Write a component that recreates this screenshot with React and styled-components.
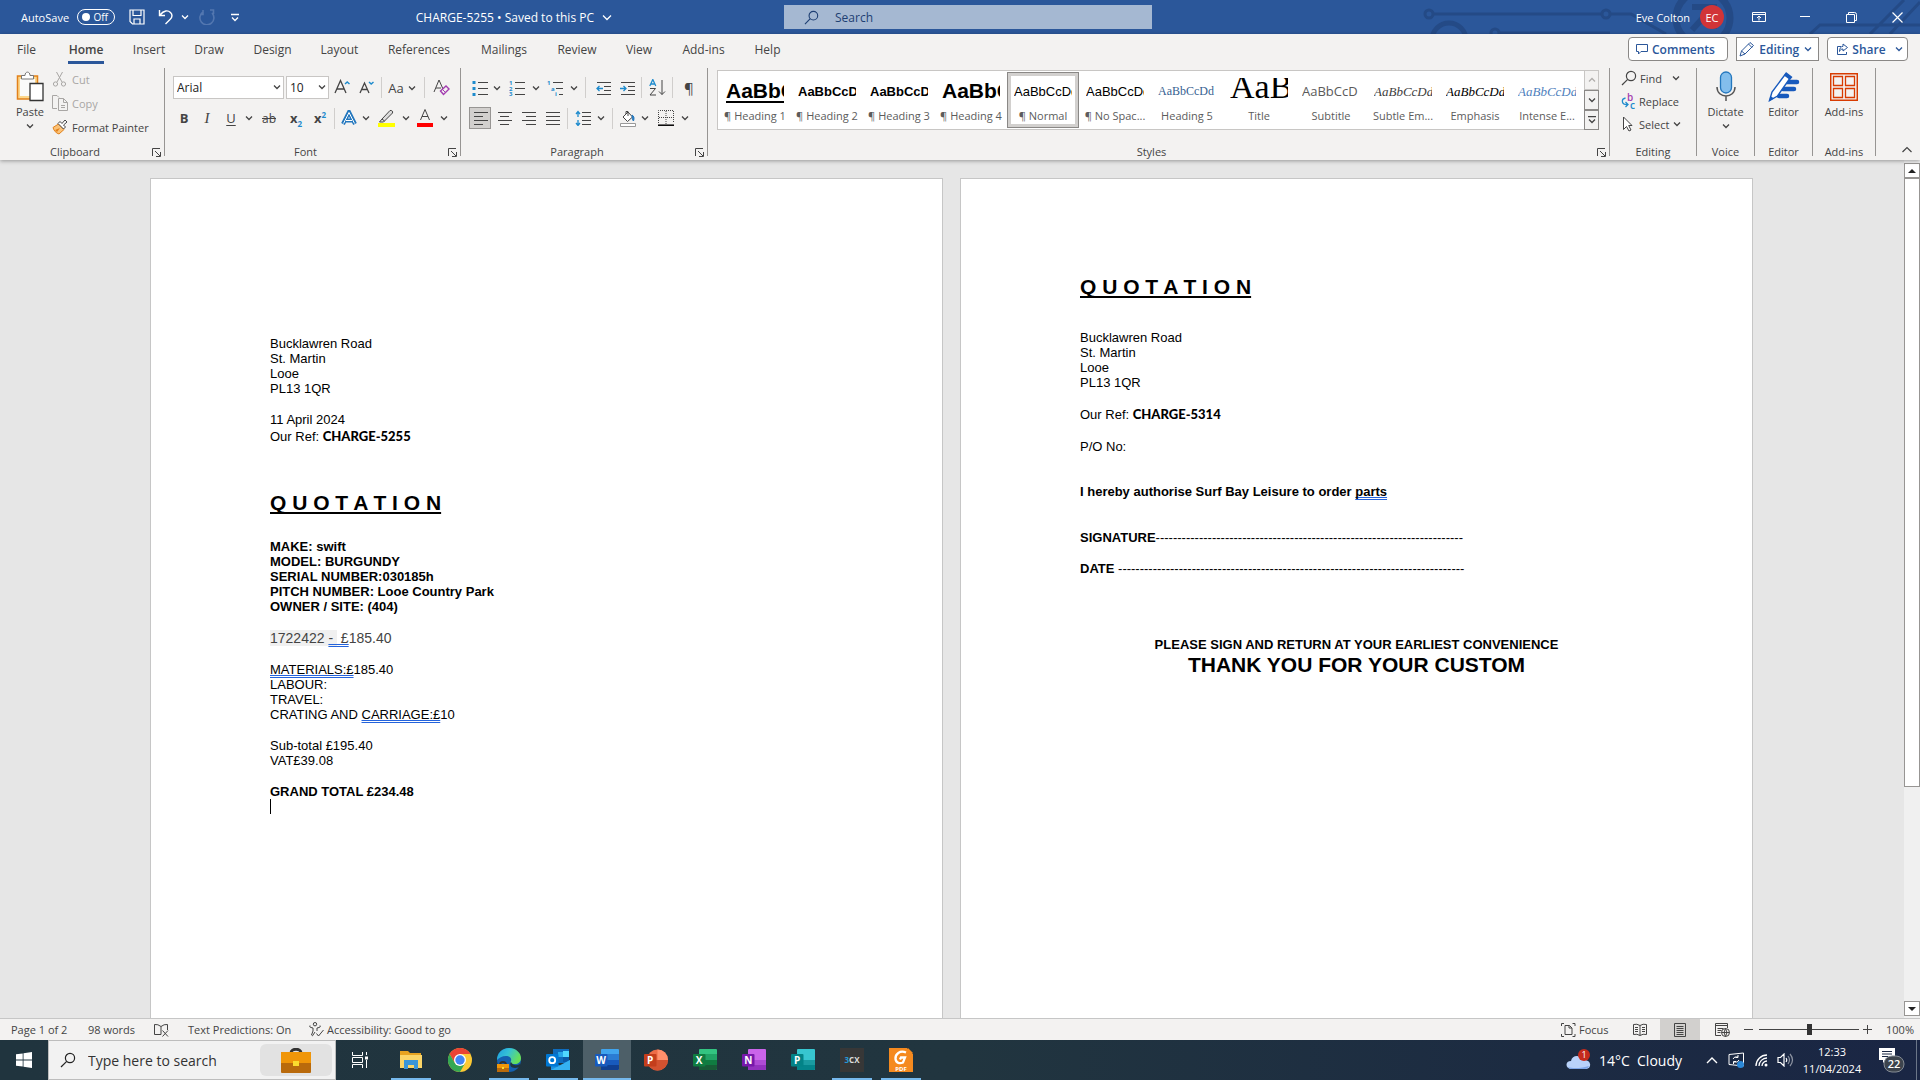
import React from "react";
import styled, { createGlobalStyle, css } from "styled-components";

const UI = `"Open Sans", "Noto Sans", sans-serif`;
const ARIAL = `"Liberation Sans", Arial, sans-serif`;
const SERIF = `"Liberation Serif", serif`;

const GlobalStyle = createGlobalStyle`
  * {
    box-sizing: border-box;
  }
  body {
    margin: 0;
    overflow: hidden;
    font-family: ${UI};
    font-size: 11px;
    color: #444;
  }
  button, input, select {
    font: inherit;
    color: inherit;
    margin: 0;
  }
  svg {
    display: block;
    flex: none;
  }
`;

const Screen = styled.div`
  display: flex;
  flex-direction: column;
  height: 100vh;
`;

/* ---------- title bar ---------- */

const TitleBar = styled.header`
  position: relative;
  display: grid;
  grid-template-columns: minmax(0, 784fr) 368px minmax(0, 768fr);
  align-items: center;
  height: 34px;
  flex: none;
  background: #2b579a;
  color: #fff;
  overflow: hidden;
`;

const Circuit = styled.svg`
  position: absolute;
  right: 0;
  top: 0;
`;

const TitleSide = styled.div`
  position: relative;
  display: flex;
  align-items: center;
  height: 100%;
  padding-left: 21px;
  justify-content: ${({ $end }) => ($end ? "flex-end" : "flex-start")};
`;

const AutoSave = styled.label`
  display: flex;
  align-items: center;
  gap: 8px;
  margin-right: 8px;
`;

const Toggle = styled.span`
  position: relative;
  display: flex;
  align-items: center;
  justify-content: flex-end;
  width: 38px;
  height: 16px;
  padding-right: 6px;
  border: 1px solid #fff;
  border-radius: 8px;
  font-size: 10px;
  input {
    position: absolute;
    left: 4px;
    appearance: none;
    width: 8px;
    height: 8px;
    border-radius: 50%;
    background: #fff;
  }
`;

const BarButton = styled.button`
  display: flex;
  align-items: center;
  justify-content: center;
  width: ${({ $w }) => $w}px;
  height: 24px;
  padding: 0;
  border: 0;
  background: none;
`;

const DocName = styled.button`
  display: flex;
  align-items: center;
  gap: 8px;
  margin-left: auto;
  margin-right: 172px;
  padding: 0;
  border: 0;
  background: none;
  font-size: 12px;
  white-space: nowrap;
`;

const TitleSearch = styled.label`
  display: flex;
  align-items: center;
  gap: 16px;
  height: 24px;
  padding-left: 20px;
  background: #a5b8d2;
  color: #1e3f73;
  input {
    flex: 1;
    min-width: 0;
    padding: 0;
    border: 0;
    background: none;
    font-size: 12px;
  }
  input::placeholder {
    color: #1e3f73;
    opacity: 1;
  }
`;

const Avatar = styled.span`
  display: flex;
  align-items: center;
  justify-content: center;
  width: 24px;
  height: 24px;
  margin: 0 12px 0 10px;
  border-radius: 50%;
  background: #d13438;
`;

/* ---------- ribbon ---------- */

const Ribbon = styled.section`
  position: relative;
  z-index: 1;
  flex: none;
  background: #f3f2f1;
  box-shadow: 0 1px 4px rgba(0, 0, 0, 0.35);
`;

const TabRow = styled.nav`
  display: flex;
  align-items: center;
  height: 34px;
  padding-right: 12px;
`;

const Tab = styled.a`
  display: flex;
  justify-content: center;
  width: ${({ $w }) => $w}px;
  color: #444;
  font-size: 12px;
  line-height: 22px;
  text-decoration: none;
  white-space: nowrap;
  span {
    height: 25px;
    margin-top: 1px;
    padding: 0 1px;
    border-bottom: 3px solid transparent;
  }
  ${({ $active }) =>
    $active &&
    css`
      font-weight: 600;
      span {
        border-color: #2b579a;
      }
    `}
`;

const TabActions = styled.div`
  display: flex;
  gap: 8px;
  margin-left: auto;
`;

const ActionButton = styled.button`
  display: flex;
  align-items: center;
  justify-content: ${({ $start }) => ($start ? "flex-start" : "space-between")};
  gap: ${({ $start }) => ($start ? 4 : 0)}px;
  width: ${({ $w }) => $w}px;
  height: 24px;
  margin-top: -4px;
  padding: 0 ${({ $pad }) => $pad || 7}px;
  border: 1px solid #8a8886;
  border-radius: ${({ $square }) => ($square ? 0 : 4)}px;
  background: #fff;
  color: #2b579a;
  font-size: 12px;
  font-weight: 600;
`;

const Groups = styled.div`
  display: flex;
  height: 92px;
`;

const Group = styled.div`
  display: flex;
  flex-direction: column;
  ${({ $w }) => ($w ? `width: ${$w}px; flex: none;` : "flex: 1; min-width: 0;")}
`;

const GroupBody = styled.div`
  flex: 1;
  padding-left: ${({ $left }) => $left || 0}px;
  padding-top: ${({ $top }) => $top || 0}px;
  display: flex;
  flex-direction: ${({ $column }) => ($column ? "column" : "row")};
  gap: ${({ $gap }) => $gap || 0}px;
`;

const GroupFooter = styled.div`
  display: flex;
  align-items: center;
  height: 16px;
  line-height: 16px;
  span {
    flex: 1;
    text-align: center;
  }
  button {
    display: flex;
    width: 14px;
    padding: 0 2px;
    border: 0;
    background: none;
  }
`;

const Separator = styled.div`
  width: 1px;
  height: 88px;
  flex: none;
  background: #979593;
`;

const ToolRow = styled.div`
  display: flex;
  align-items: center;
  height: ${({ $h }) => $h}px;
`;

const Tool = styled.button`
  display: flex;
  align-items: center;
  justify-content: center;
  width: ${({ $w }) => $w}px;
  height: 100%;
  padding: 0;
  flex: none;
  font-size: 13px;
  border: 1px solid ${({ $on }) => ($on ? "#979593" : "transparent")};
  background: ${({ $on }) => ($on ? "#d2d0ce" : "none")};
`;

const ToolDivider = styled.span`
  width: ${({ $w }) => $w}px;
  height: 21px;
  flex: none;
  background: linear-gradient(#d0cecc, #d0cecc) center / 1px 100% no-repeat;
`;

const SelectBox = styled.label`
  position: relative;
  display: flex;
  width: ${({ $w }) => $w}px;
  height: 23px;
  margin-right: ${({ $gap }) => $gap || 0}px;
  select {
    appearance: none;
    width: 100%;
    padding: 0 3px 1px;
    border: 1px solid #c8c6c4;
    border-radius: 0;
    background: #fff;
    color: #222;
    font-size: 12px;
  }
  svg {
    position: absolute;
    right: 3px;
    top: 8px;
  }
`;

const BigButton = styled.button`
  display: flex;
  flex-direction: column;
  align-items: center;
  width: ${({ $w }) => $w}px;
  height: 72px;
  padding: 3px 0 0;
  border: 0;
  background: none;
  line-height: 16px;
  span {
    margin: 2px 0 3px;
  }
`;

const SmallButton = styled.button`
  display: flex;
  align-items: center;
  gap: ${({ $gap }) => $gap || 4}px;
  height: ${({ $h }) => $h}px;
  padding: 0;
  border: 0;
  background: none;
  white-space: nowrap;
  color: ${({ disabled }) => (disabled ? "#a8a6a4" : "#444")};
  svg:last-child:not(:first-child) {
    margin-left: ${({ $gap }) => ($gap ? 1 : 4)}px;
  }
`;

const Gallery = styled.div`
  display: flex;
  width: 100%;
  height: 60px;
  margin-right: 10px;
  border: 1px solid #c8c6c4;
  border-right: 0;
  background: #fff;
`;

const GalleryItems = styled.div`
  display: flex;
  flex: 1;
  min-width: 0;
  padding: 1px;
  overflow: hidden;
`;

const StyleItem = styled.button`
  display: flex;
  flex-direction: column;
  align-items: center;
  gap: 2px;
  width: 72px;
  height: 56px;
  flex: none;
  padding: 6px 0 0;
  border: 0;
  background: none;
  color: #5c5c5c;
  box-shadow: ${({ $on }) =>
    $on ? "inset 0 0 0 1px #8a8886, inset 0 0 0 4px #d2d0ce" : "none"};
`;

const Preview = styled.span`
  display: block;
  width: 58px;
  height: 28px;
  overflow: hidden;
  white-space: nowrap;
  text-align: left;
  font-family: ${({ $font }) => $font};
  font-size: ${({ $size }) => $size}px;
  font-weight: ${({ $bold }) => ($bold ? 700 : 400)};
  font-style: ${({ $italic }) => ($italic ? "italic" : "normal")};
  color: ${({ $color }) => $color || "#000"};
  line-height: ${({ $lh }) => $lh || 27}px;
  text-decoration: ${({ $underline }) => ($underline ? "underline 2px" : "none")};
  text-underline-offset: 3px;
`;

const StyleName = styled.span`
  height: 16px;
  line-height: 16px;
  white-space: nowrap;
`;

const GalleryScroll = styled.div`
  display: grid;
  grid-template-rows: 1fr 1fr 1fr;
  width: 15px;
  margin: -1px 0;
  button {
    display: flex;
    align-items: center;
    justify-content: center;
    padding: 0;
    border: 1px solid #8a8886;
    background: #f3f2f1;
  }
  button:disabled {
    border-color: #c8c6c4;
    color: #b0aeac;
  }
`;

const CollapseRibbon = styled.div`
  display: flex;
  align-items: flex-end;
  justify-content: flex-end;
  width: 44px;
  padding: 0 8px 4px;
`;

/* ---------- document ---------- */

const Workspace = styled.main`
  display: flex;
  flex: 1;
  min-height: 0;
  background: #e6e6e6;
`;

const Pages = styled.div`
  display: flex;
  flex: 1;
  justify-content: center;
  gap: 17px;
  padding: 18px 1px 0 0;
  overflow: hidden;
`;

const Page = styled.article`
  width: 793px;
  height: 1123px;
  flex: none;
  padding: ${({ $top }) => $top}px 119px 0;
  border: 1px solid #c6c6c6;
  background: #fff;
  color: #000;
  font-family: ${ARIAL};
  font-size: 13px;
`;

const Block = styled.div`
  margin-bottom: ${({ $after }) => ($after === undefined ? 16 : $after)}px;
  line-height: ${({ $lh }) => $lh || 15}px;
  font-weight: ${({ $bold }) => ($bold ? 700 : 400)};
  text-align: ${({ $center }) => ($center ? "center" : "left")};
  white-space: pre;
  p {
    margin: 0;
  }
`;

const Heading = styled.h1`
  margin: 0 0 ${({ $after }) => $after}px;
  font-size: 21px;
  line-height: 24px;
  text-align: ${({ $center }) => ($center ? "center" : "left")};
  text-decoration: ${({ $center }) => ($center ? "none" : "underline 2px")};
  text-underline-offset: 2px;
  text-decoration-skip-ink: none;
`;

const Ref = styled.b`
  font-family: Lato, sans-serif;
  font-weight: 900;
`;

const Dashes = styled.span`
  font-weight: 400;
`;

const Grammar = styled.span`
  text-decoration: underline double #2463dc 1px;
  text-decoration-skip-ink: none;
  text-underline-offset: 1px;
`;

const PartLine = styled.p`
  color: #444;
  font-size: 14px;
  mark {
    background: #f0f0f0;
    color: inherit;
  }
`;

const Caret = styled.div`
  width: 1px;
  height: 15px;
  background: #000;
`;

const Scrollbar = styled.div`
  display: flex;
  flex-direction: column;
  width: 16px;
  padding: 3px 0 2px;
  background: #f0f0f0;
  button {
    display: flex;
    align-items: center;
    justify-content: center;
    height: 15px;
    padding: 0;
    border: 1px solid #979593;
    background: #fff;
  }
`;

const Track = styled.div`
  flex: 1;
`;

const Thumb = styled.div`
  height: 74%;
  border: 1px solid #979593;
  background: #fff;
`;

/* ---------- status bar ---------- */

const StatusBar = styled.footer`
  display: flex;
  align-items: center;
  height: 22px;
  flex: none;
  padding: 0 6px 0 11px;
  border-top: 1px solid #c6c6c6;
  background: #f3f2f1;
  white-space: nowrap;
`;

const StatusItem = styled.button`
  display: flex;
  align-items: center;
  gap: 3px;
  min-width: ${({ $w }) => $w}px;
  height: 21px;
  padding: 0;
  border: 0;
  background: ${({ $on }) => ($on ? "#d2d0ce" : "none")};
  justify-content: ${({ $center }) => ($center ? "center" : "flex-start")};
`;

const StatusRight = styled.div`
  display: flex;
  align-items: center;
  margin-left: auto;
`;

const Zoom = styled.input`
  appearance: none;
  width: 100px;
  height: 12px;
  background: linear-gradient(#444, #444) center / 100% 1px no-repeat;
  &::-webkit-slider-thumb {
    appearance: none;
    width: 5px;
    height: 11px;
    background: #333;
  }
`;

/* ---------- taskbar ---------- */

const Taskbar = styled.footer`
  display: flex;
  height: 40px;
  flex: none;
  background: linear-gradient(90deg, #20343e, #21353f 50%, #1c2b42 80%, #1a2644);
  color: #fff;
`;

const TaskButton = styled.button`
  display: flex;
  align-items: center;
  justify-content: center;
  width: ${({ $w }) => $w || 48}px;
  margin-right: ${({ $gap }) => $gap || 0}px;
  padding: 0;
  border: 0;
  background: ${({ $active }) => ($active ? "#4d5f68" : "none")};
  ${({ $open }) =>
    $open &&
    css`
      background: linear-gradient(#76b9ed, #76b9ed) bottom / 40px 2px no-repeat;
    `}
  ${({ $active }) => $active && "box-shadow: inset 0 -2px #76b9ed;"}
`;

const TaskSearch = styled.label`
  display: flex;
  align-items: center;
  width: 288px;
  padding: 0 3px 0 11px;
  border: 1px solid #bdbdbd;
  background: #f2f2f2;
  color: #222;
  input {
    flex: 1;
    min-width: 0;
    margin-left: 12px;
    padding: 0;
    border: 0;
    background: none;
    font-size: 14px;
  }
  input::placeholder {
    color: #333;
    opacity: 1;
  }
`;

const Highlight = styled.span`
  display: flex;
  align-items: center;
  justify-content: center;
  width: 72px;
  height: 32px;
  border-radius: 6px;
  background: #e2e2e2;
`;

const Tray = styled.div`
  display: flex;
  align-items: center;
  margin-left: auto;
  padding-right: 3px;
`;

const Weather = styled.button`
  display: flex;
  align-items: center;
  gap: 8px;
  margin-right: 18px;
  padding: 0;
  border: 0;
  background: none;
  font-size: 14px;
  white-space: pre;
`;

const Clock = styled.time`
  width: 72px;
  margin-right: 9px;
  line-height: 17px;
  text-align: center;
`;

const ShowDesktop = styled.span`
  width: 1px;
  height: 40px;
  margin-left: 11px;
  background: #6b7688;
`;

/* ---------- drawings ---------- */

const Svg = ({ w = 16, h = 16, sw = 1, children, ...rest }) => (
  <svg
    width={w}
    height={h}
    viewBox={`0 0 ${w} ${h}`}
    fill="none"
    stroke="currentColor"
    strokeWidth={sw}
    aria-hidden="true"
    {...rest}
  >
    {children}
  </svg>
);

const Chevron = ({ up }) => (
  <Svg w={8} h={6} sw={1.3}>
    <path d={up ? "M1 4.5 4 1.5 7 4.5" : "M1 1.5 4 4.5 7 1.5"} />
  </Svg>
);

const Lens = ({ size = 16 }) => (
  <Svg w={size} h={size} viewBox="0 0 16 16" sw={1.2}>
    <circle cx="10" cy="6" r="4.6" />
    <path d="M6.7 9.3 1 15" />
  </Svg>
);

const Launcher = () => (
  <Svg w={9} h={9}>
    <path d="M.5 8V.5H8M3 3l5 5M8.5 4v4.5H4" />
  </Svg>
);

const SaveIcon = () => (
  <Svg sw={1.2}>
    <path d="M1 1h14v14H3.5L1 12.5zM4 1v5.500h8V1M5 15v-5h6v5" />
  </Svg>
);

const UndoIcon = () => (
  <Svg sw={1.4}>
    <path d="M1.500 1v5.500H7M2 6c4-5 8-5 10.500-2.500 2.500 2.600 1.500 5-.5 7L7.500 15" />
  </Svg>
);

const RedoIcon = () => (
  <Svg sw={1.6} stroke="#5377b0">
    <path d="M4 1v4.500H1M4 3a7 7 0 1 0 9 1M11 1h3.500v4" />
  </Svg>
);

const PasteIcon = () => (
  <Svg w={28} h={31}>
    <rect x="1.500" y="5" width="20" height="23" fill="#fcd78c" stroke="#e2811a" strokeWidth="1.500" />
    <path d="M4 8h15v17H4z" fill="#fafafa" stroke="none" />
    <path d="M5.500 8V4.500h3.500c0-4.500 5-4.500 5 0h3.500V8z" fill="#fff" stroke="#777" />
    <path d="M14 12.500h13v17H14z" fill="#fff" stroke="#333" strokeWidth="1.300" />
  </Svg>
);

const CutIcon = () => (
  <Svg>
    <path d="M4.500 1 10 11M10.500 1 5 11" />
    <circle cx="3.500" cy="13" r="2.100" />
    <circle cx="11.500" cy="13" r="2.100" />
  </Svg>
);

const CopyIcon = () => (
  <Svg>
    <path d="M5 13.500H.500V.500H5l2 2M6.500 3.500h5l4 4v8h-9zM11.500 3.500v4h4M9 10.500h4M9 12.500h4" />
  </Svg>
);

const PainterIcon = () => (
  <Svg>
    <path d="M1 8.500 6.500 5 12 10.500 7 15C4 14 2 12 1 8.500z" fill="#fbc277" stroke="#e2811a" />
    <path d="m3 11 5-2-3 4z" fill="#e2811a" stroke="none" />
    <path d="m6 4.500 2-2 2 2 3-3.500 2 2-3.500 3 2 2-2 2z" fill="#fff" stroke="#444" />
  </Svg>
);

const GrowFont = ({ down }) => (
  <Svg w={18} h={18}>
    <path d={down ? "M2 14 6.500 4 11 14M3.500 10.500h6" : "M1 14 6.500 1.500 12 14M3 10h7"} strokeWidth="1.300" />
    <path d={down ? "m11 3 2.200 2L15.500 3" : "m11 5 2.200-2L15.500 5"} stroke="#1e8bcd" strokeWidth="1.500" />
  </Svg>
);

const ClearFormat = () => (
  <Svg w={17} h={17}>
    <path d="M1 13 6 1l4 9M3 9h5" />
    <path d="m7.500 12 5.500-5 3 3-5.500 5.500z" fill="#f3f2f1" stroke="#a33db0" strokeWidth="1.400" />
    <path d="m9.500 10.500 3 3" stroke="#a33db0" />
  </Svg>
);

const Glyph = styled.span`
  font-size: ${({ $size }) => $size || 13}px;
  font-weight: ${({ $bold }) => ($bold ? 700 : 400)};
  font-style: ${({ $italic }) => ($italic ? "italic" : "normal")};
  font-family: ${({ $serif }) => ($serif ? SERIF : UI)};
  text-decoration: ${({ $line }) => $line || "none"};
  text-underline-offset: 2px;
  sub,
  sup {
    color: #1e8bcd;
    font-size: 8px;
    line-height: 0;
  }
`;

const TextEffects = () => (
  <Svg w={16}>
    <path d="M2 14 8 2l6 12M4.500 10.500h7" stroke="#2377be" strokeWidth="4" />
    <path d="M2.500 13.500 8 2.500l5.500 11M5 10.500h6" stroke="#fff" strokeWidth="1" />
  </Svg>
);

const HighlightIcon = () => (
  <Svg w={17} h={18}>
    <path d="m4 10 8-8.500c2-.500 3 1 2.500 2.500l-8 8zM4 10l-2.500 3h4l1-1" fill="#ddd" />
    <path d="M0 14h17v4H0z" fill="#ff0" stroke="none" />
  </Svg>
);

const FontColor = () => (
  <Svg w={16} h={18}>
    <path d="M3.500 11 8 .500 12.500 11M5 7.500h6" />
    <path d="M0 14h16v4H0z" fill="#f00" stroke="none" />
  </Svg>
);

const ListIcon = ({ kind }) => (
  <Svg w={17}>
    <path d={kind === "multi" ? "M6 2.500h10M9 8.500h7M12 14.500h4" : "M6 2.500h10M6 8.500h10M6 14.500h10"} />
    {kind === "bullet" && <path d="M.500 1h3v3h-3zM.500 7h3v3h-3zM.500 13h3v3h-3z" fill="#1e8bcd" stroke="none" />}
    {kind !== "bullet" && (
      <g fill="#1e8bcd" stroke="none" fontSize="6" fontWeight="700">
        <text x="0" y="5">1</text>
        <text x={kind === "multi" ? 4 : 0} y="11">{kind === "multi" ? "a" : "2"}</text>
        <text x={kind === "multi" ? 8 : 0} y="16">{kind === "multi" ? "i" : "3"}</text>
      </g>
    )}
  </Svg>
);

const IndentIcon = ({ out }) => (
  <Svg w={15} h={14}>
    <path d="M1 1.500h14M8 5.500h7M8 9.500h7M1 13.500h14" />
    <path d={out ? "M7 7.500H1M3.500 5 1 7.500 3.500 10" : "M0 7.500h6M3.500 5 6 7.500 3.500 10"} stroke="#1e8bcd" strokeWidth="1.300" />
  </Svg>
);

const SortIcon = () => (
  <Svg w={17} h={17}>
    <path d="M.800 7 3.800.500 6.800 7M1.800 5h4" stroke="#1e8bcd" strokeWidth="1.300" />
    <path d="M1 9.500h5.500L1 16h6M13 1v14.500M10 12.500l3 3 3-3" />
  </Svg>
);

const AlignIcon = ({ d }) => (
  <Svg w={15} h={14}>
    <path d={d} />
  </Svg>
);

const SpacingIcon = () => (
  <Svg w={17}>
    <path d="M7 2.500h9M7 6.500h9M7 10.500h9M7 14.500h9" />
    <path d="M3 2v5M1 4l2-2.500L5 4M3 10v5M1 13l2 2.500L5 13" stroke="#1e8bcd" strokeWidth="1.300" />
  </Svg>
);

const ShadeIcon = () => (
  <Svg w={17} h={17}>
    <path d="M3 7 8 2l4.500 5-5 4.500zM6 4V1.500h2V6" fill="#fff" />
    <path d="M12 5c2 1 2.500 3 1.500 6-1.500-1-1-4-1.500-6z" fill="#2377be" stroke="#2377be" />
    <path d="M.500 13.500h15v3H.500z" fill="#fff" stroke="#999" />
  </Svg>
);

const BorderIcon = () => (
  <Svg w={16}>
    <path d="M.500 13V.500h15V13M8 1v13M1 7.500h14" strokeDasharray="1 1" />
    <path d="M0 15.200h16" strokeWidth="1.500" stroke="#000" />
  </Svg>
);

const ReplaceIcon = () => (
  <Svg w={15} h={17}>
    <g stroke="none" fontSize="10" fontWeight="600">
      <text x="6" y="8" fill="#a33db0">b</text>
      <text x="9" y="16" fill="#1e8bcd">c</text>
    </g>
    <path d="M4.500 5C0 6 0 12 7 11.500M4.500 9 7 11.500 4.500 14" stroke="#1e8bcd" strokeWidth="1.300" />
  </Svg>
);

const PointerIcon = () => (
  <Svg w={15} h={16}>
    <path d="M2.500 1v12.500l3-3 2.500 4.500 2-1-2.300-4.500H11z" fill="#fff" />
  </Svg>
);

const MicIcon = () => (
  <Svg w={20} h={31}>
    <rect x="4.500" y="1" width="11" height="21" rx="5.500" fill="#83beec" stroke="#2377be" strokeWidth="1.300" />
    <path d="M1 16c0 12 18 12 18 0M10 25v5" strokeWidth="1.500" stroke="#555" />
  </Svg>
);

const EditorIcon = () => (
  <Svg w={32} h={31}>
    <path d="M18 11h11M15 18h11M11 25h8" stroke="#185abd" strokeWidth="4.500" strokeLinecap="round" />
    <path d="M1.500 29.500 4 21 17.500 3l5 3.500L9.500 25z" fill="#fff" stroke="#185abd" strokeWidth="1.400" />
    <path d="m18 1 6.500 5-2.500 3-6-4.500zM1 30.500 2.500 25l3.500 2.500z" fill="#185abd" stroke="none" />
  </Svg>
);

const AddInsIcon = () => (
  <Svg w={28} h={31} stroke="#d83b01">
    <path d="M.700 2.700h26.600v26.600H.700z" strokeWidth="1.500" />
    <path d="M3.500 5.500h9v9h-9zM15.500 5.500h9v9h-9zM3.500 17.500h9v9h-9zM15.500 17.500h9v9h-9z" strokeWidth="1.300" />
  </Svg>
);

const OfficeIcon = ({ letter, tile, shades, round }) => (
  <svg width="24" height="24" viewBox="0 0 24 24" aria-hidden="true">
    {round ? (
      <>
        <circle cx="13.500" cy="12" r="10.500" fill={shades[0]} />
        <path d="M13.500 1.500A10.500 10.500 0 0 1 24 12H13.500z" fill={shades[1]} />
        <path d="M3 12h21a10.500 10.500 0 0 1-21 0z" fill={shades[2]} />
      </>
    ) : (
      <>
        <rect x="6" y="1" width="18" height="21" rx="1" fill={shades[0]} />
        <path d="M6 6h18v6H6z" fill={shades[1]} />
        <path d="M6 12h18v5H6z" fill={shades[2]} />
        <path d="M6 17h18v4a1 1 0 0 1-1 1H6z" fill={shades[3]} />
      </>
    )}
    <rect x="0" y="6" width="12.500" height="12.500" rx="1" fill={tile} />
    <text x="6.200" y="16" textAnchor="middle" fontSize="10" fontWeight="700" fill="#fff">
      {letter}
    </text>
  </svg>
);

const Folder = () => (
  <svg width="22" height="20" viewBox="0 0 22 20" aria-hidden="true">
    <path d="M0 1h8l2 2h11v4H0z" fill="#e7a321" />
    <path d="M0 5h22v13H0z" fill="#fbd568" />
    <path d="M4 19v-9h14v9h-4v-4H8v4z" fill="#3a95d8" />
  </svg>
);

const Chrome = () => (
  <svg width="24" height="24" viewBox="0 0 24 24" aria-hidden="true">
    <circle cx="12" cy="12" r="12" fill="#fcc934" />
    <path d="M1.600 6A12 12 0 0 1 22.400 6H12L6.800 15z" fill="#ea4335" />
    <path d="M1.600 6A12 12 0 0 0 12 24l5.200-9-5.200 3-5.200-3z" fill="#34a853" />
    <circle cx="12" cy="12" r="6" fill="#fff" />
    <circle cx="12" cy="12" r="4.700" fill="#4285f4" />
  </svg>
);

const Briefcase = () => (
  <svg width="30" height="25" viewBox="0 0 30 25" aria-hidden="true">
    <path d="M10 5c0-5 10-5 10 0" fill="none" stroke="#333" strokeWidth="3" />
    <rect y="4" width="30" height="21" rx="1" fill="#b96a0c" />
    <path d="M0 5q0-1 1-1h28q1 0 1 1v10H0z" fill="#f09609" />
    <rect x="12" y="13" width="6" height="5" fill="#fbdc2e" />
  </svg>
);

const Edge = () => (
  <svg width="24" height="24" viewBox="0 0 24 24" aria-hidden="true">
    <defs>
      <linearGradient id="edge" x1="0" y1="0" x2="1" y2=".4">
        <stop offset="0" stopColor="#1c9de0" />
        <stop offset=".5" stopColor="#35c1d6" />
        <stop offset="1" stopColor="#66e05a" />
      </linearGradient>
    </defs>
    <circle cx="12" cy="12" r="12" fill="#1460b0" />
    <path d="M0 12C0 5 5 0 12 0s12 5 12 10c0 4-3 6-6 6-4 0-5-1-4-3 1-3-2-5-5-5-4 0-7 2-9 4z" fill="url(#edge)" />
    <path d="M14 14c2 4 6 4 9 2l1 3-6 1c-4 0-6-3-4-6z" fill="#21353f" />
    <g>
      <path d="M3 17c0-4 6-4 6 0" fill="none" stroke="#333" strokeWidth="2" />
      <rect y="16" width="12" height="8" fill="#b96a0c" />
      <rect y="16" width="12" height="4" fill="#f09609" />
      <rect x="5" y="19" width="2" height="2" fill="#fbdc2e" />
    </g>
  </svg>
);

const Outlook = () => (
  <svg width="24" height="24" viewBox="0 0 24 24" aria-hidden="true">
    <rect x="7" y="1" width="16" height="14" fill="#0f6cbd" />
    <path d="M12 4h5v5h-5z" fill="#28a8ea" />
    <path d="M17 3h6v6h-6z" fill="#50d9ff" />
    <path d="M17 9h6v5h-6z" fill="#0a5aa8" />
    <path d="M5 12 14.500 18 24 12v10H5z" fill="#1a90df" />
    <path d="M5 22 24 12v10z" fill="#35b1f1" />
    <rect y="6" width="12.500" height="12.500" rx="1" fill="#0078d4" />
    <circle cx="6.200" cy="12.200" r="3" fill="none" stroke="#fff" strokeWidth="1.800" />
  </svg>
);

const ThreeCx = () => (
  <svg width="24" height="24" viewBox="0 0 24 24" aria-hidden="true">
    <rect width="24" height="24" fill="#373737" />
    <text x="12" y="15" textAnchor="middle" fontSize="8" fontWeight="700" fill="#ddd">
      <tspan fill="#2596d6">3</tspan>CX
    </text>
  </svg>
);

const Foxit = () => (
  <svg width="24" height="24" viewBox="0 0 24 24" aria-hidden="true">
    <path d="M0 0h18l6 6v18H0z" fill="#f58a1f" />
    <path d="M19 0v5h5z" fill="#f58a1f" />
    <path d="M17 4.500C11 2 6 6 6.500 11c.500 4 4.500 5 7.500 3.500l2-5h-4l-1 2" fill="none" stroke="#fff" strokeWidth="2.300" />
    <text x="12" y="23" textAnchor="middle" fontSize="6" fontWeight="700" fill="#fff">PDF</text>
  </svg>
);

/* ---------- data ---------- */

const tabs = [
  ["File", 53],
  ["Home", 66],
  ["Insert", 60],
  ["Draw", 60],
  ["Design", 67],
  ["Layout", 67],
  ["References", 92],
  ["Mailings", 78],
  ["Review", 68],
  ["View", 56],
  ["Add-ins", 73],
  ["Help", 55],
];

const styleItems = [
  { name: "¶ Heading 1", text: "AaBbC", font: ARIAL, size: 21, bold: true, underline: true, lh: 25 },
  { name: "¶ Heading 2", text: "AaBbCcD", font: ARIAL, size: 13, bold: true },
  { name: "¶ Heading 3", text: "AaBbCcD", font: ARIAL, size: 13, bold: true },
  { name: "¶ Heading 4", text: "AaBbC", font: ARIAL, size: 21, bold: true, lh: 25 },
  { name: "¶ Normal", text: "AaBbCcDd", font: ARIAL, size: 13, on: true },
  { name: "¶ No Spac...", text: "AaBbCcDd", font: ARIAL, size: 13 },
  { name: "Heading 5", text: "AaBbCcDd", font: SERIF, size: 12, color: "#365f91" },
  { name: "Title", text: "AaB", font: SERIF, size: 34, lh: 18 },
  { name: "Subtitle", text: "AaBbCcD", font: UI, size: 13, color: "#5a5a5a" },
  { name: "Subtle Em...", text: "AaBbCcDd", font: SERIF, size: 13, italic: true, color: "#404040" },
  { name: "Emphasis", text: "AaBbCcDd", font: SERIF, size: 13, italic: true },
  { name: "Intense E...", text: "AaBbCcDd", font: SERIF, size: 13, italic: true, color: "#4f81bd" },
];

const RibbonGroup = ({ label, w, launcher, children, ...body }) => (
  <>
    <Group $w={w}>
      <GroupBody {...body}>{children}</GroupBody>
      <GroupFooter>
        <span>{label}</span>
        {launcher && (
          <button aria-label={`${label} settings`}>
            <Launcher />
          </button>
        )}
      </GroupFooter>
    </Group>
    <Separator />
  </>
);

const Drop = ({ w = 10, label = "More options" }) => (
  <Tool $w={w} aria-label={label}>
    <Chevron />
  </Tool>
);

const TitleArea = () => (
  <TitleBar>
    <Circuit width="500" height="34" fill="none" stroke="#244a86" strokeWidth="3" aria-hidden="true">
      <circle cx="9" cy="14" r="4" />
      <path d="M13 14h168M191 14h20l35 20M80 33h110M390 34l10-9h100M470 34l30-32M450 34 484 0" />
      <circle cx="186" cy="14" r="4" />
      <circle cx="29" cy="40" r="17" strokeWidth="5" />
      <circle cx="75" cy="33" r="4" />
      <circle cx="283" cy="18" r="27" strokeWidth="7" />
      <path d="m272 30 20-22M272 7h22v22" strokeWidth="6" />
    </Circuit>
    <TitleSide>
      <AutoSave>
        AutoSave
        <Toggle>
          <input type="checkbox" />
          Off
        </Toggle>
      </AutoSave>
      <BarButton $w={28} aria-label="Save">
        <SaveIcon />
      </BarButton>
      <BarButton $w={30} aria-label="Undo">
        <UndoIcon />
      </BarButton>
      <BarButton $w={8} aria-label="Undo history">
        <Chevron />
      </BarButton>
      <BarButton $w={36} aria-label="Redo">
        <RedoIcon />
      </BarButton>
      <BarButton $w={20} aria-label="Customise toolbar">
        <Svg w={8} h={9} sw={1.3}>
          <path d="M0 1.500h8M1 4.500 4 7.500 7 4.500" />
        </Svg>
      </BarButton>
      <DocName>
        CHARGE-5255 • Saved to this PC
        <Svg w={10} h={7} sw={1.3}>
          <path d="m1 1.500 4 4 4-4" />
        </Svg>
      </DocName>
    </TitleSide>
    <TitleSearch>
      <Lens size={15} />
      <input type="search" placeholder="Search" aria-label="Search" />
    </TitleSearch>
    <TitleSide $end>
      Eve Colton
      <Avatar>EC</Avatar>
      <BarButton $w={46} aria-label="Ribbon display options">
        <Svg w={14} h={12}>
          <path d="M.500 1.500h13v9H.500zM.500 3.500h13M7 9.500V5M5 7l2-2 2 2" />
        </Svg>
      </BarButton>
      <BarButton $w={46} aria-label="Minimise">
        <Svg w={10} h={2}>
          <path d="M0 .500h10" />
        </Svg>
      </BarButton>
      <BarButton $w={46} aria-label="Restore">
        <Svg w={11} h={11}>
          <path d="M.500 2.500h8v8h-8zM2.500 2.500V.500h6q2 0 2 2v6h-2" />
        </Svg>
      </BarButton>
      <BarButton $w={46} aria-label="Close">
        <Svg w={11} h={11} sw={1.2}>
          <path d="m.500.500 10 10M10.500.500l-10 10" />
        </Svg>
      </BarButton>
    </TitleSide>
  </TitleBar>
);

const Tabs = () => (
  <TabRow>
    {tabs.map(([name, w]) => (
      <Tab key={name} href="#" $w={w} $active={name === "Home"}>
        <span>{name}</span>
      </Tab>
    ))}
    <TabActions>
      <ActionButton $w={100} $start>
        <Svg w={12} h={12}>
          <path d="M.500 1.500h11v7H5L2.500 11V8.500h-2z" />
        </Svg>
        Comments
      </ActionButton>
      <ActionButton $w={83} $pad={2} $square>
        <Svg w={16} h={16}>
          <path d="M1 15 2.500 10 11 1.500l3.500 3L6 13zM9.500 3l3.500 3.500M2.500 10 6 13" />
        </Svg>
        Editing
        <Chevron />
        <span />
      </ActionButton>
      <ActionButton $w={81} $pad={4}>
        <span />
        <Svg w={11} h={12}>
          <path d="M4 3.500H.500v8h9V9M6 1l4.500 3.500L6 8V6C4 6 3 7 2.500 8.500 2.500 5 4 3.500 6 3.300z" />
        </Svg>
        Share
        <span />
        <Chevron />
      </ActionButton>
    </TabActions>
  </TabRow>
);

const FontGroup = () => (
  <RibbonGroup label="Font" w={295} launcher $left={8} $top={8} $gap={8} $column>
    <ToolRow $h={23}>
      <SelectBox $w={111} $gap={2}>
        <select aria-label="Font">
          <option>Arial</option>
        </select>
        <Chevron />
      </SelectBox>
      <SelectBox $w={43}>
        <select aria-label="Font size">
          <option>10</option>
        </select>
        <Chevron />
      </SelectBox>
      <Tool $w={28} aria-label="Increase font size"><GrowFont /></Tool>
      <Tool $w={20} aria-label="Decrease font size"><GrowFont down /></Tool>
      <ToolDivider $w={8} />
      <Tool $w={22}>Aa</Tool>
      <Drop />
      <ToolDivider $w={14} />
      <Tool $w={20} aria-label="Clear formatting"><ClearFormat /></Tool>
    </ToolRow>
    <ToolRow $h={22}>
      <Tool $w={22}><Glyph $bold>B</Glyph></Tool>
      <Tool $w={24}><Glyph $italic $serif $size={15}>I</Glyph></Tool>
      <Tool $w={24}><Glyph $line="underline">U</Glyph></Tool>
      <Drop w={12} />
      <Tool $w={28}><Glyph $size={12} $line="line-through">ab</Glyph></Tool>
      <Tool $w={26}><Glyph $bold>x<sub>2</sub></Glyph></Tool>
      <Tool $w={22}><Glyph $bold>x<sup>2</sup></Glyph></Tool>
      <ToolDivider $w={6} />
      <Tool $w={24} aria-label="Text effects"><TextEffects /></Tool>
      <Drop />
      <Tool $w={30} aria-label="Highlight colour"><HighlightIcon /></Tool>
      <Drop />
      <Tool $w={28} aria-label="Font colour"><FontColor /></Tool>
      <Drop />
    </ToolRow>
  </RibbonGroup>
);

const ParagraphGroup = () => (
  <RibbonGroup label="Paragraph" w={246} launcher $left={8} $top={8} $gap={8} $column>
    <ToolRow $h={23}>
      <Tool $w={22} aria-label="Bullets"><ListIcon kind="bullet" /></Tool>
      <Drop w={12} />
      <Tool $w={28} aria-label="Numbering"><ListIcon kind="number" /></Tool>
      <Drop />
      <Tool $w={28} aria-label="Multilevel list"><ListIcon kind="multi" /></Tool>
      <Drop w={10} />
      <ToolDivider $w={12} />
      <Tool $w={24} aria-label="Decrease indent"><IndentIcon out /></Tool>
      <Tool $w={24} aria-label="Increase indent"><IndentIcon /></Tool>
      <ToolDivider $w={5} />
      <Tool $w={26} aria-label="Sort"><SortIcon /></Tool>
      <ToolDivider $w={5} />
      <Tool $w={28}><Glyph $size={15}>¶</Glyph></Tool>
    </ToolRow>
    <ToolRow $h={22}>
      <Tool $w={22} $on aria-label="Align left"><AlignIcon d="M1 1.500h14M1 5.500h9M1 9.500h14M1 13.500h9" /></Tool>
      <Tool $w={26} aria-label="Centre"><AlignIcon d="M1 1.500h14M3 5.500h9M1 9.500h14M3 13.500h9" /></Tool>
      <Tool $w={22} aria-label="Align right"><AlignIcon d="M1 1.500h14M5 5.500h10M1 9.500h14M5 13.500h10" /></Tool>
      <Tool $w={26} aria-label="Justify"><AlignIcon d="M1 1.500h14M1 5.500h14M1 9.500h14M1 13.500h14" /></Tool>
      <ToolDivider $w={5} />
      <Tool $w={26} aria-label="Line spacing"><SpacingIcon /></Tool>
      <Drop />
      <ToolDivider $w={12} />
      <Tool $w={20} aria-label="Shading"><ShadeIcon /></Tool>
      <Drop w={14} />
      <Tool $w={28} aria-label="Borders"><BorderIcon /></Tool>
      <Drop />
    </ToolRow>
  </RibbonGroup>
);

const StylesGroup = () => (
  <RibbonGroup label="Styles" launcher $left={9} $top={2}>
    <Gallery>
      <GalleryItems>
        {styleItems.map((s) => (
          <StyleItem key={s.name} $on={s.on}>
            <Preview
              $font={s.font}
              $size={s.size}
              $bold={s.bold}
              $italic={s.italic}
              $underline={s.underline}
              $color={s.color}
              $lh={s.lh}
            >
              {s.text}
            </Preview>
            <StyleName>{s.name}</StyleName>
          </StyleItem>
        ))}
      </GalleryItems>
      <GalleryScroll>
        <button disabled aria-label="Previous styles">
          <Chevron up />
        </button>
        <button aria-label="Next styles">
          <Chevron />
        </button>
        <button aria-label="All styles">
          <Svg w={8} h={8} sw={1.3}>
            <path d="M0 .700h8M1 3.500 4 6.500 7 3.500" />
          </Svg>
        </button>
      </GalleryScroll>
    </Gallery>
  </RibbonGroup>
);

const RibbonArea = () => (
  <Ribbon>
    <Tabs />
    <Groups>
      <RibbonGroup label="Clipboard" w={164} launcher $left={8}>
        <BigButton $w={44}>
          <PasteIcon />
          <span>Paste</span>
          <Chevron />
        </BigButton>
        <div>
          <SmallButton $h={22} disabled><CutIcon />Cut</SmallButton>
          <SmallButton $h={26} disabled><CopyIcon />Copy</SmallButton>
          <SmallButton $h={22}><PainterIcon />Format Painter</SmallButton>
        </div>
      </RibbonGroup>
      <FontGroup />
      <ParagraphGroup />
      <StylesGroup />
      <RibbonGroup label="Editing" w={86} $left={11} $column>
        <SmallButton $h={20} $gap={3}><Lens />Find<span /><span /><Chevron /></SmallButton>
        <SmallButton $h={26} $gap={3}><ReplaceIcon />Replace</SmallButton>
        <SmallButton $h={20} $gap={3}><PointerIcon />Select<Chevron /></SmallButton>
      </RibbonGroup>
      <RibbonGroup label="Voice" w={57}>
        <BigButton $w={57}><MicIcon /><span>Dictate</span><Chevron /></BigButton>
      </RibbonGroup>
      <RibbonGroup label="Editor" w={57}>
        <BigButton $w={57}><EditorIcon /><span>Editor</span></BigButton>
      </RibbonGroup>
      <RibbonGroup label="Add-ins" w={62}>
        <BigButton $w={62}><AddInsIcon /><span>Add-ins</span></BigButton>
      </RibbonGroup>
      <CollapseRibbon>
        <BarButton $w={10} aria-label="Collapse ribbon">
          <Svg w={10} h={24} sw={1.2}>
            <path d="m.500 20 4.500-4.500L9.500 20" />
          </Svg>
        </BarButton>
      </CollapseRibbon>
    </Groups>
  </Ribbon>
);

const Address = () => (
  <>
    <p>Bucklawren Road</p>
    <p>St. Martin</p>
    <p>Looe</p>
    <p>PL13 1QR</p>
  </>
);

const Document = () => (
  <Workspace>
    <Pages>
      <Page $top={157}>
        <Block><Address /></Block>
        <Block $lh={16} $after={46}>
          <p>11 April 2024</p>
          <p>Our Ref: <Ref>CHARGE-5255</Ref></p>
        </Block>
        <Heading $after={24}>Q U O T A T I O N</Heading>
        <Block $bold>
          <p>MAKE: swift</p>
          <p>MODEL: BURGUNDY</p>
          <p>SERIAL NUMBER:030185h</p>
          <p>PITCH NUMBER: Looe Country Park</p>
          <p>OWNER / SITE: (404)</p>
        </Block>
        <Block $lh={16}>
          <PartLine>
            <mark>1722422 <Grammar>- </Grammar></mark><Grammar> £</Grammar>185.40
          </PartLine>
        </Block>
        <Block>
          <p><Grammar>MATERIALS:£</Grammar>185.40</p>
          <p>LABOUR:</p>
          <p>TRAVEL:</p>
          <p>CRATING AND <Grammar>CARRIAGE:£</Grammar>10</p>
        </Block>
        <Block>
          <p>Sub-total £195.40</p>
          <p>VAT£39.08</p>
        </Block>
        <Block $bold $after={0}>
          <p>GRAND TOTAL £234.48</p>
        </Block>
        <Caret />
      </Page>
      <Page $top={96}>
        <Heading $after={31}>Q U O T A T I O N</Heading>
        <Block><Address /></Block>
        <Block $lh={16}>
          <p>Our Ref: <Ref>CHARGE-5314</Ref></p>
        </Block>
        <Block $after={30}>
          <p>P/O No:</p>
        </Block>
        <Block $bold $after={31}>
          <p>I hereby authorise Surf Bay Leisure to order <Grammar>parts</Grammar></p>
        </Block>
        <Block $bold>
          <p>SIGNATURE<Dashes>{"-".repeat(71)}</Dashes></p>
        </Block>
        <Block $bold $after={61}>
          <p>DATE <Dashes>{"-".repeat(80)}</Dashes></p>
        </Block>
        <Block $bold $center $lh={16} $after={0}>
          <p>PLEASE SIGN AND RETURN AT YOUR EARLIEST CONVENIENCE</p>
        </Block>
        <Heading $center $after={0}>THANK YOU FOR YOUR CUSTOM</Heading>
      </Page>
    </Pages>
    <Scrollbar>
      <button aria-label="Scroll up">
        <Svg w={8} h={4} stroke="none" fill="#222"><path d="M0 4 4 0l4 4z" /></Svg>
      </button>
      <Track>
        <Thumb />
      </Track>
      <button aria-label="Scroll down">
        <Svg w={8} h={4} stroke="none" fill="#222"><path d="m0 0 4 4 4-4z" /></Svg>
      </button>
    </Scrollbar>
  </Workspace>
);

const Status = () => (
  <StatusBar>
    <StatusItem $w={77}>Page 1 of 2</StatusItem>
    <StatusItem $w={66}>98 words</StatusItem>
    <StatusItem $w={34} aria-label="Proofing">
      <Svg w={15} h={14}>
        <path d="M7 3.500Q4 1 .500 1.500v10H7zM7 3.500Q10 1 13.500 1.500V7M8.500 7.500l5.500 6M14 7.500l-5.500 6" />
      </Svg>
    </StatusItem>
    <StatusItem $w={121}>Text Predictions: On</StatusItem>
    <StatusItem>
      <Svg w={15} h={15}>
        <circle cx="6" cy="2.200" r="1.700" />
        <path d="M1 3.500q-1 1.500 1 2l2 .500v3L2.500 13l1 .800L6 10M11 3.500q1 1.500-1 2L8 6v3M7.500 11.500l2 2.500 5-6" />
      </Svg>
      Accessibility: Good to go
    </StatusItem>
    <StatusRight>
      <StatusItem $w={59}>
        <Svg w={15} h={14}>
          <path d="M.500 3V.500H3M11.500.500H14V3M.500 11v2.500H3M14 11v2.500h-2.500M4 2.500h4.500l2.500 2.500v6.500H4zM8 2.500V5h3" />
        </Svg>
        Focus
      </StatusItem>
      <StatusItem $w={40} $center aria-label="Read mode">
        <Svg w={14} h={13}>
          <path d="M7 2.500Q4 .500.500 1.500v10Q4 10.500 7 12.500 10 10.500 13.500 11.500v-10Q10 .500 7 2.500v10M2 4.500h3M2 6.500h3M2 8.500h3M9 4.500h3M9 6.500h3M9 8.500h3" />
        </Svg>
      </StatusItem>
      <StatusItem $w={40} $on $center aria-label="Print layout">
        <Svg w={12} h={14}>
          <path d="M.500.500h11v13H.500zM2.500 3.500h7M2.500 5.500h7M2.500 7.500h7M2.500 9.500h7M2.500 11.500h7" />
        </Svg>
      </StatusItem>
      <StatusItem $w={44} $center aria-label="Web layout">
        <Svg w={15} h={14}>
          <path d="M6 12.500H.500V.500h12V5M.500 2.500h12M2.500 5.500h6M2.500 7.500h4M2.500 9.500h3" />
          <circle cx="10.500" cy="9.500" r="4" />
          <path d="M6.500 9.500h8M10.500 5.500q-3 4 0 8 3-4 0-8" />
        </Svg>
      </StatusItem>
      <StatusItem $w={15} aria-label="Zoom out">
        <Svg w={9} h={9}><path d="M0 4.500h9" /></Svg>
      </StatusItem>
      <Zoom type="range" min="0" max="100" defaultValue="50" aria-label="Zoom" />
      <StatusItem $w={27} aria-label="Zoom in">
        <Svg w={13} h={9}><path d="M4 4.500h9M8.500 0v9" /></Svg>
      </StatusItem>
      <StatusItem>100%</StatusItem>
    </StatusRight>
  </StatusBar>
);

const TaskbarArea = () => (
  <Taskbar>
    <TaskButton aria-label="Start">
      <svg width="16" height="16" viewBox="0 0 16 16" fill="#fff" aria-hidden="true">
        <path d="M0 2.300 6.700 1.400v6.200H0zM7.500 1.200 16 0v7.600H7.500zM0 8.400h6.700v6.200L0 13.700zM7.500 8.400H16V16l-8.500-1.200z" />
      </svg>
    </TaskButton>
    <TaskSearch>
      <Lens />
      <input type="search" placeholder="Type here to search" aria-label="Type here to search" />
      <Highlight>
        <Briefcase />
      </Highlight>
    </TaskSearch>
    <TaskButton $gap={3} aria-label="Task view">
      <Svg>
        <path d="M.500 0v3.500h10V0M.500 16v-3.500h10V16M.500 5.500h10v5H.500zM14.500 0v3M14.500 8v8" />
        <path d="M13 4.500h3v3h-3z" fill="#fff" stroke="none" />
      </Svg>
    </TaskButton>
    <TaskButton $gap={1} $open aria-label="File Explorer"><Folder /></TaskButton>
    <TaskButton $gap={1} aria-label="Chrome"><Chrome /></TaskButton>
    <TaskButton $gap={1} $open aria-label="Edge"><Edge /></TaskButton>
    <TaskButton $gap={1} $open aria-label="Outlook"><Outlook /></TaskButton>
    <TaskButton $gap={1} $active aria-label="Word">
      <OfficeIcon letter="W" tile="#185abd" shades={["#41a5ee", "#2b7cd3", "#185abd", "#103f91"]} />
    </TaskButton>
    <TaskButton $gap={1} aria-label="PowerPoint">
      <OfficeIcon letter="P" tile="#c43e1c" round shades={["#ed6c47", "#ff8f6b", "#d35230"]} />
    </TaskButton>
    <TaskButton $gap={1} aria-label="Excel">
      <OfficeIcon letter="X" tile="#107c41" shades={["#33c481", "#21a366", "#107c41", "#185c37"]} />
    </TaskButton>
    <TaskButton $gap={1} aria-label="OneNote">
      <OfficeIcon letter="N" tile="#7719aa" shades={["#ca64ea", "#ca64ea", "#ae4bd5", "#9332bf"]} />
    </TaskButton>
    <TaskButton $gap={1} aria-label="Publisher">
      <OfficeIcon letter="P" tile="#038387" shades={["#37c6d0", "#37c6d0", "#1a9ba1", "#04858b"]} />
    </TaskButton>
    <TaskButton $gap={1} $open aria-label="3CX"><ThreeCx /></TaskButton>
    <TaskButton $open aria-label="Foxit PDF"><Foxit /></TaskButton>
    <Tray>
      <Weather>
        <svg width="25" height="24" viewBox="0 0 25 24" aria-hidden="true">
          <path d="M5 21C-1 20-1 13 5 13c1-6 9-7 12-1 9-1 9 9 3 9z" fill="#b9d2fa" />
          <path d="M2 19c5 2 15 1 21-1-1 2-2 3-4 3H5q-2 0-3-2z" fill="#7ea6e8" />
          <circle cx="18" cy="7" r="6" fill="#c42b1c" />
          <text x="18" y="10" textAnchor="middle" fontSize="9" fill="#fff">1</text>
        </svg>
        <span>14°C  Cloudy</span>
      </Weather>
      <TaskButton $w={24} aria-label="Hidden icons">
        <Svg w={12} h={8} sw={1.4}><path d="m1 7 5-5 5 5" /></Svg>
      </TaskButton>
      <TaskButton $w={24} aria-label="Updates">
        <Svg w={17} h={16}>
          <path d="M1 2.500 15.500 1v13L1 12.500z" />
          <path d="M5 7q1-3 5-2M10 3v2.500H7.500M11 8q-1 3-5 2M5.500 12V9.500H8" />
          <circle cx="12.500" cy="12.500" r="3.500" fill="#2b88d8" stroke="none" />
        </Svg>
      </TaskButton>
      <TaskButton $w={26} aria-label="Network">
        <Svg w={13} h={13} sw={1.3}>
          <path d="M1 12A11 11 0 0 1 12 1M4 12a8 8 0 0 1 8-8M7 12a5 5 0 0 1 5-5" />
          <circle cx="11" cy="11" r="1.500" fill="#fff" stroke="none" />
        </Svg>
      </TaskButton>
      <TaskButton $w={22} aria-label="Volume">
        <Svg w={17} h={14} sw={1.2}>
          <path d="M1 4.500h2.500L7 1v12L3.500 9.500H1zM9 5q1.500 2 0 4" />
          <path d="M11 3q3 4 0 8M13 1q5 6 0 12" opacity=".5" />
        </Svg>
      </TaskButton>
      <Clock>
        12:33
        <br />
        11/04/2024
      </Clock>
      <TaskButton $w={28} aria-label="Notifications">
        <svg width="27" height="26" viewBox="0 0 27 26" aria-hidden="true">
          <path d="M1 1h16v12H8l-3 3v-3H1z" fill="#fff" />
          <path d="M4 4.500h10M4 7h10M4 9.500h6" stroke="#1b2844" />
          <rect x="6" y="9" width="20" height="16" rx="8" fill="#3d444d" stroke="#858c95" />
          <text x="16" y="21" textAnchor="middle" fontSize="11" fontWeight="600" fill="#fff">22</text>
        </svg>
      </TaskButton>
      <ShowDesktop />
    </Tray>
  </Taskbar>
);

const App = () => (
  <Screen>
    <GlobalStyle />
    <TitleArea />
    <RibbonArea />
    <Document />
    <Status />
    <TaskbarArea />
  </Screen>
);

export default App;
